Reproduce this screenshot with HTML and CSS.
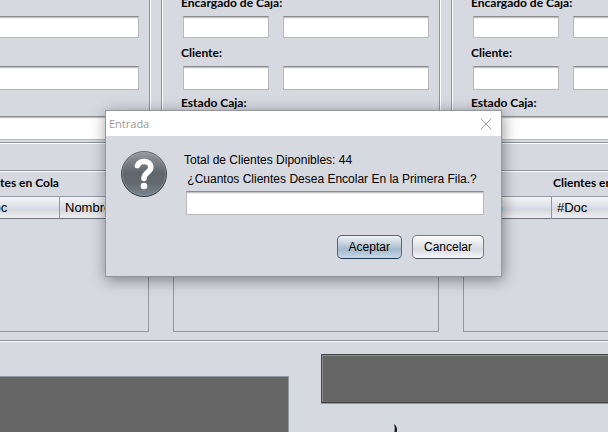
FILE: index.html
```html
<!DOCTYPE html>
<html lang="es">
<head>
<meta charset="utf-8">
<title>Entrada</title>
<link rel="stylesheet" href="styles.css">
</head>
<body>
<main class="window">
  <section class="desks">
    <div class="desk">
      <label class="caption" for="e1">Encargado de Caja:</label>
      <div class="pair short"><input id="e1" class="field"><input class="field" aria-label="Nombre del encargado"></div>
      <label class="caption" for="c1">Cliente:</label>
      <div class="pair"><input id="c1" class="field"><input class="field" aria-label="Nombre del cliente"></div>
      <label class="caption" for="s1">Estado Caja:</label>
      <div class="single"><input id="s1" class="field"></div>
    </div>
    <div class="desk">
      <label class="caption" for="e2">Encargado de Caja:</label>
      <div class="pair short"><input id="e2" class="field"><input class="field" aria-label="Nombre del encargado"></div>
      <label class="caption" for="c2">Cliente:</label>
      <div class="pair"><input id="c2" class="field"><input class="field" aria-label="Nombre del cliente"></div>
      <label class="caption" for="s2">Estado Caja:</label>
      <div class="single"><input id="s2" class="field"></div>
    </div>
    <div class="desk">
      <label class="caption" for="e3">Encargado de Caja:</label>
      <div class="pair short"><input id="e3" class="field"><input class="field" aria-label="Nombre del encargado"></div>
      <label class="caption" for="c3">Cliente:</label>
      <div class="pair"><input id="c3" class="field"><input class="field" aria-label="Nombre del cliente"></div>
      <label class="caption" for="s3">Estado Caja:</label>
      <div class="single"><input id="s3" class="field"></div>
    </div>
  </section>

  <section class="queues">
    <div class="queue">
      <h2 class="caption">Clientes en Cola</h2>
      <div class="grid"><table><thead><tr><th>Turno</th><th>#Doc</th><th>Nombre</th></tr></thead></table></div>
    </div>
    <div class="queue">
      <h2 class="caption">Clientes en Cola</h2>
      <div class="grid"><table><thead><tr><th>Turno</th><th>#Doc</th><th>Nombre</th></tr></thead></table></div>
    </div>
    <div class="queue">
      <h2 class="caption">Clientes en Cola</h2>
      <div class="grid"><table><thead><tr><th>Turno</th><th>#Doc</th><th>Nombre</th></tr></thead></table></div>
    </div>
  </section>

  <section class="lower">
    <div class="log"></div>
    <div class="side">
      <div class="display"></div>
      <svg class="mark" width="8" height="12" viewBox="0 0 8 12" aria-hidden="true"><path d="M1 0Q4 2 4 6L3 12H0Q3 6 1 0Z" fill="#111"/></svg>
    </div>
  </section>
</main>

<div class="dialog" role="dialog" aria-labelledby="title">
  <header class="titlebar">
    <span id="title">Entrada</span>
    <button class="close" aria-label="Cerrar"><svg width="12" height="12" viewBox="0 0 12 12"><path d="M1 1L11 11M11 1L1 11" stroke="#999" stroke-width="1" fill="none"/></svg></button>
  </header>
  <form class="content">
    <svg class="question" width="46" height="46" viewBox="0 0 46 46" aria-hidden="true">
      <defs>
        <linearGradient id="ball" x1="0" y1="0" x2="0" y2="1"><stop offset="0" stop-color="#989b9f"/><stop offset=".48" stop-color="#60656b"/><stop offset=".7" stop-color="#626970"/><stop offset="1" stop-color="#7d8890"/></linearGradient>
        <linearGradient id="rim" x1="0" y1="0" x2="0" y2="1"><stop offset="0" stop-color="#62666b"/><stop offset="1" stop-color="#242c36"/></linearGradient>
      </defs>
      <circle cx="23" cy="23" r="22.5" fill="url(#ball)" stroke="url(#rim)"/>
      <circle cx="23" cy="23" r="21.5" fill="none" stroke="#b0b5ba" stroke-opacity=".35"/>
      <path d="M16.500 14.600C18 8.800 29.800 9 29.800 16.200C29.800 21.500 23 21.500 23 27.500" fill="none" stroke="#fff" stroke-width="5.600" stroke-linecap="round"/>
      <circle cx="23" cy="35" r="3.300" fill="#fff"/>
    </svg>
    <div class="column">
      <label class="message" for="amount">Total de Clientes Diponibles: 44
 ¿Cuantos Clientes Desea Encolar En la Primera Fila.?</label>
      <input id="amount" class="field">
      <div class="actions">
        <button type="button" class="btn primary">Aceptar</button>
        <button type="button" class="btn">Cancelar</button>
      </div>
    </div>
  </form>
</div>
</body>
</html>
```
FILE: styles.css
```css
* { box-sizing: border-box; }
body {
  margin: 0;
  height: 100vh;
  overflow: hidden;
  position: relative;
  background: #d6d9e0;
  color: #000;
  font: 12px/19px "Liberation Sans", Arial, sans-serif;
}
.window { margin: -25px -122px 0 -129px; }
.caption {
  display: block;
  margin: 0;
  font: 700 12px/16px Lato, "Open Sans", sans-serif;
}
.desks { display: grid; grid-template-columns: repeat(3, 1fr); gap: 11px; }
.desk {
  padding: 19px 10px 1px 19px;
  border: 1px solid #8f929b;
  box-shadow: 1px 1px #fff, inset 1px 1px #fff;
}
.pair, .single { display: flex; gap: 14px; margin: 5px 0 5px 2px; }
.pair.short { margin-bottom: 7px; }
.single { margin-bottom: 1px; }
.field {
  flex: 1;
  width: 100%;
  min-width: 0;
  height: 24px;
  padding: 0 6px;
  border: 1px solid #b9b9bc;
  border-top-color: #8c8c8f;
  background: #fff;
  box-shadow: inset 0 1px #c3c3c5, inset 0 2px #f0f0f1;
  font: inherit;
  outline: none;
}
.pair .field:first-child { flex: 0 0 86px; }
.short .field { height: 22px; }
.queues {
  display: grid;
  grid-template-columns: repeat(3, 1fr);
  gap: 24px;
  margin-top: 27px;
  padding: 4px 1px 8px 12px;
  border: solid #8f929b;
  border-width: 1px 0;
  box-shadow: 0 1px #fff, inset 0 1px #fff;
}
.queue .caption { text-align: center; }
.grid { height: 136px; margin-top: 5px; border: 1px solid #9297a1; }
table { width: 100%; table-layout: fixed; border-collapse: separate; border-spacing: 0; }
th {
  height: 22px;
  padding: 0 5px;
  border-right: 1px solid #9297a1;
  border-bottom: 1px solid #6f747e;
  background: linear-gradient(#f5f6f8, #dcdee3 50%, #d5d8dd 60%, #eff0f3);
  font-size: 13px;
  font-weight: normal;
  text-align: left;
}
th:last-child { border-right: 0; }
.lower { display: flex; gap: 32px; }
.log { flex: 0 0 418px; height: 100px; margin-top: 35px; background: #666; border: 1px solid #9297a1; }
.side { flex: 1; padding-top: 13px; }
.display {
  height: 49px;
  background: #666;
  border: 1px solid #444;
  box-shadow: inset 1px 1px #8c8c8c, 0 1px #929498;
}
.mark { display: block; margin: 21px 0 0 72px; }

.dialog {
  position: absolute;
  top: 110px;
  left: calc(50% - 199px);
  width: 397px;
  border: 1px solid #94969b;
  background: #d6d9e0;
  box-shadow: 1px 3px 14px rgba(0, 0, 0, .42);
}
.titlebar {
  display: flex;
  align-items: center;
  justify-content: space-between;
  height: 25px;
  padding: 0 9px 0 3px;
  background: #fff;
  color: #999;
  font: 11px/16px "Open Sans", "Noto Sans", sans-serif;
}
.close { display: flex; padding: 0; border: 0; background: none; }
.content { display: flex; gap: 17px; padding: 15px 17px 17px 15px; }
.question { flex: none; }
.column { flex: 1; min-width: 0; }
.message { display: block; white-space: pre; }
.column .field { display: block; width: calc(100% - 2px); margin: 2px 0 0 2px; }
.actions { display: flex; justify-content: flex-end; gap: 10px; margin-top: 20px; }
.btn {
  height: 24px;
  padding: 0 11px;
  border: 1px solid #777b82;
  border-bottom-color: #4e5259;
  border-radius: 5px;
  background: linear-gradient(#fbfbfc, #dfe1e6 50%, #d8dbe0 60%, #f5f6f9);
  color: #000;
  font: inherit;
}
.btn.primary {
  border-color: #52677d;
  border-bottom-color: #24384f;
  background: linear-gradient(#eef2f6, #b3c4d3 50%, #a3b8ca 60%, #c4d8e9);
}
```
